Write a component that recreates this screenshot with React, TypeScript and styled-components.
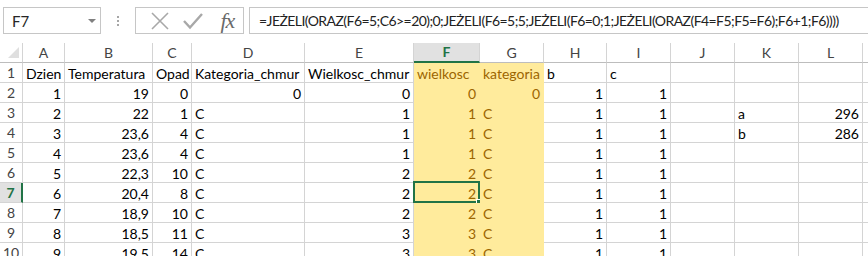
import React from 'react';
import styled, { createGlobalStyle, css } from 'styled-components';

const GlobalStyle = createGlobalStyle`
  html, body { margin: 0; padding: 0; background: #fff; }
  body { width: 868px; height: 256px; overflow: hidden; font-family: Lato, "Open Sans", "Liberation Sans", sans-serif; }
`;

const GREEN = '#217346';
const GRID = '#d4d4d4';

const Page = styled.div`
  width: 868px;
  height: 256px;
  overflow: hidden;
  background: #fff;
`;

const FormulaBar = styled.div`
  display: flex;
  align-items: flex-start;
  height: 43px;
  padding-top: 7px;
  box-sizing: border-box;
`;

const Box = styled.div`
  height: 27px;
  box-sizing: border-box;
  border: 1px solid #c6c6c6;
  background: #fff;
  display: flex;
  align-items: center;
`;

const NameBox = styled(Box)`
  width: 98px;
  margin-left: 3px;
  padding: 0 0 0 8px;
  justify-content: space-between;
  font-size: 15px;
  color: #262626;
`;

const DropArrow = styled.span`
  width: 0;
  height: 0;
  margin-right: 4px;
  border-left: 4px solid transparent;
  border-right: 4px solid transparent;
  border-top: 4px solid #808080;
`;

const Dots = styled.div`
  width: 34px;
  height: 27px;
  display: flex;
  flex-direction: column;
  align-items: center;
  justify-content: center;
  gap: 2px;
  & > span {
    width: 2px;
    height: 2px;
    background: #a6a6a6;
  }
`;

const FuncBox = styled(Box)`
  width: 109px;
  padding: 0 0 0 7px;
`;

const IconSlot = styled.span`
  width: 36px;
  height: 25px;
  display: flex;
  align-items: center;
  justify-content: center;
`;

const Fx = styled.span`
  font-family: "Liberation Serif", "DejaVu Serif", serif;
  font-style: italic;
  font-size: 22px;
  color: #6a6a6a;
  letter-spacing: -1px;
  margin-left: 2px;
`;

const FormulaInput = styled(Box)`
  flex: 1;
  margin-left: 5px;
  border-right: none;
  padding-left: 9px;
  font-size: 14px;
  letter-spacing: -0.56px;
  color: #222;
  white-space: nowrap;
  overflow: hidden;
`;

const Sheet = styled.div`
  display: grid;
  grid-template-columns: 23px 42px 88px 39px 113px 109px 66px 64px 63px 64px 64px 64px 64px 1fr;
  grid-auto-rows: 20px;
  font-size: 14px;
`;

const Corner = styled.div`
  position: relative;
  box-sizing: border-box;
  border-right: 1px solid ${GRID};
  border-bottom: 1px solid #bdbdbd;
  &::after {
    content: '';
    position: absolute;
    right: 3px;
    bottom: 4px;
    width: 0;
    height: 0;
    border-left: 11px solid transparent;
    border-bottom: 11px solid #dfdfdf;
  }
`;

const ColHeader = styled.div<{ $active?: boolean }>`
  box-sizing: border-box;
  border-right: 1px solid ${GRID};
  border-bottom: 1px solid #bdbdbd;
  display: flex;
  align-items: center;
  justify-content: center;
  color: #444;
  line-height: 20px;
  ${(p) =>
    p.$active &&
    css`
      background: #e1e1e1;
      color: ${GREEN};
      font-weight: 700;
      border-bottom: 2px solid ${GREEN};
    `}
`;

const RowHeader = styled.div<{ $active?: boolean }>`
  box-sizing: border-box;
  border-right: 1px solid ${GRID};
  border-bottom: 1px solid ${GRID};
  display: flex;
  align-items: center;
  justify-content: center;
  color: #444;
  line-height: 20px;
  ${(p) =>
    p.$active &&
    css`
      background: #e1e1e1;
      color: ${GREEN};
      font-weight: 700;
      border-right: 2px solid ${GREEN};
    `}
`;

const Cell = styled.div<{ $right?: boolean; $neutral?: boolean }>`
  position: relative;
  box-sizing: border-box;
  border-right: 1px solid ${GRID};
  border-bottom: 1px solid ${GRID};
  padding: 1px 3px 0;
  line-height: 20px;
  white-space: nowrap;
  color: #000;
  text-align: ${(p) => (p.$right ? 'right' : 'left')};
  ${(p) =>
    p.$neutral &&
    css`
      background: #ffeb9c;
      color: #9c6500;
      border-color: #ffeb9c;
    `}
`;

const Selection = styled.div`
  position: absolute;
  left: -1px;
  top: -2px;
  right: -1px;
  bottom: -1px;
  border: 2px solid ${GREEN};
  pointer-events: none;
  &::after {
    content: '';
    position: absolute;
    right: -5px;
    bottom: -5px;
    width: 5px;
    height: 5px;
    background: ${GREEN};
    border: 1px solid #fff;
  }
`;

const COLS = ['A', 'B', 'C', 'D', 'E', 'F', 'G', 'H', 'I', 'J', 'K', 'L', ''];

type V = string | null;
const ROWS: V[][] = [
  ['Dzien', 'Temperatura', 'Opad', 'Kategoria_chmur', 'Wielkosc_chmur', 'wielkosc', 'kategoria', 'b', 'c', null, null, null, null],
  ['1', '19', '0', '0', '0', '0', '0', '1', '1', null, null, null, null],
  ['2', '22', '1', 'C', '1', '1', 'C', '1', '1', null, 'a', '296', null],
  ['3', '23,6', '4', 'C', '1', '1', 'C', '1', '1', null, 'b', '286', null],
  ['4', '23,6', '4', 'C', '1', '1', 'C', '1', '1', null, null, null, null],
  ['5', '22,3', '10', 'C', '2', '2', 'C', '1', '1', null, null, null, null],
  ['6', '20,4', '8', 'C', '2', '2', 'C', '1', '1', null, null, null, null],
  ['7', '18,9', '10', 'C', '2', '2', 'C', '1', '1', null, null, null, null],
  ['8', '18,5', '11', 'C', '3', '3', 'C', '1', '1', null, null, null, null],
  ['9', '19,5', '14', 'C', '3', '3', 'C', '1', '1', null, null, null, null],
];

const isNum = (v: V) => v !== null && /^[\d,]+$/.test(v);

const FORMULA =
  '=JEŻELI(ORAZ(F6=5;C6>=20);0;JEŻELI(F6=5;5;JEŻELI(F6=0;1;JEŻELI(ORAZ(F4=F5;F5=F6);F6+1;F6))))';

export default function App() {
  return (
    <Page>
      <GlobalStyle />
      <FormulaBar>
        <NameBox>
          F7
          <DropArrow />
        </NameBox>
        <Dots>
          <span />
          <span />
          <span />
        </Dots>
        <FuncBox>
          <IconSlot>
            <svg width="20" height="20" viewBox="0 0 20 20">
              <path d="M2 2 L18 18 M18 2 L2 18" stroke="#a8a8a8" strokeWidth="1.6" fill="none" />
            </svg>
          </IconSlot>
          <IconSlot>
            <svg width="22" height="20" viewBox="0 0 22 20">
              <path d="M2 10 L8 16.5 L20 3" stroke="#a8a8a8" strokeWidth="2.4" fill="none" />
            </svg>
          </IconSlot>
          <IconSlot>
            <Fx>fx</Fx>
          </IconSlot>
        </FuncBox>
        <FormulaInput>{FORMULA}</FormulaInput>
      </FormulaBar>
      <Sheet>
        <Corner />
        {COLS.map((c, i) => (
          <ColHeader key={i} $active={c === 'F'}>
            {c}
          </ColHeader>
        ))}
        {ROWS.map((row, r) => (
          <React.Fragment key={r}>
            <RowHeader $active={r === 6}>{r + 1}</RowHeader>
            {row.map((v, c) => (
              <Cell key={c} $right={isNum(v)} $neutral={c === 5 || c === 6}>
                {v}
                {r === 6 && c === 5 && <Selection />}
              </Cell>
            ))}
          </React.Fragment>
        ))}
      </Sheet>
    </Page>
  );
}
